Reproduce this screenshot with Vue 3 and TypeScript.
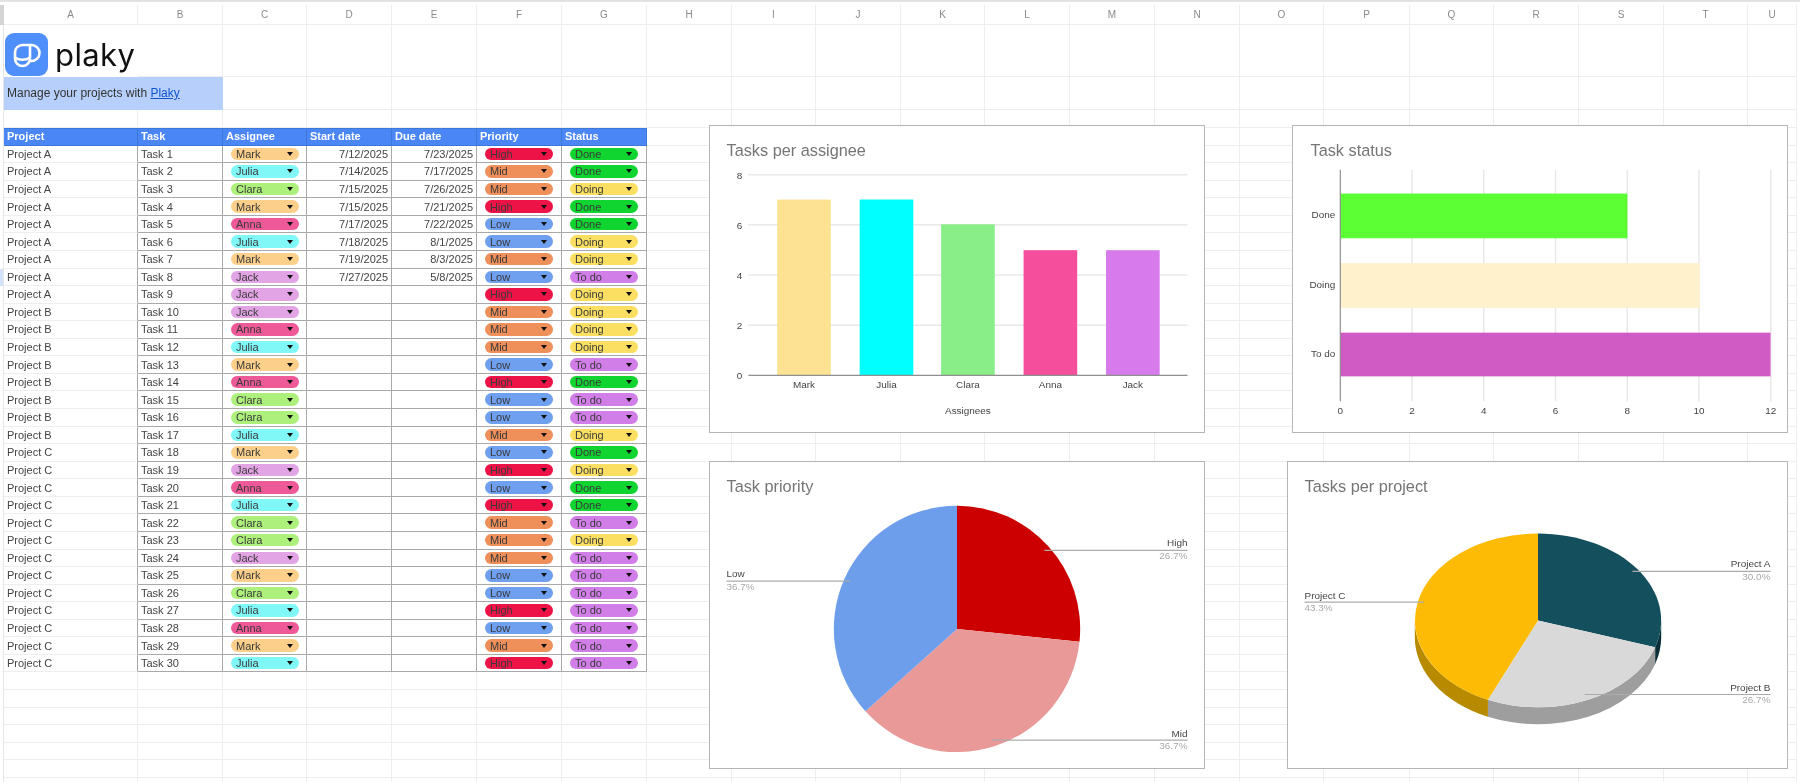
<script setup lang="ts">
const letters = 'ABCDEFGHIJKLMNOPQRSTU'.split('');

// one line per task: project|assignee|priority|status|start|due
const raw = [
  'A|Mark|High|Done|7/12/2025|7/23/2025',
  'A|Julia|Mid|Done|7/14/2025|7/17/2025',
  'A|Clara|Mid|Doing|7/15/2025|7/26/2025',
  'A|Mark|High|Done|7/15/2025|7/21/2025',
  'A|Anna|Low|Done|7/17/2025|7/22/2025',
  'A|Julia|Low|Doing|7/18/2025|8/1/2025',
  'A|Mark|Mid|Doing|7/19/2025|8/3/2025',
  'A|Jack|Low|To do|7/27/2025|5/8/2025',
  'A|Jack|High|Doing',
  'B|Jack|Mid|Doing',
  'B|Anna|Mid|Doing',
  'B|Julia|Mid|Doing',
  'B|Mark|Low|To do',
  'B|Anna|High|Done',
  'B|Clara|Low|To do',
  'B|Clara|Low|To do',
  'B|Julia|Mid|Doing',
  'C|Mark|Low|Done',
  'C|Jack|High|Doing',
  'C|Anna|Low|Done',
  'C|Julia|High|Done',
  'C|Clara|Mid|To do',
  'C|Clara|Mid|Doing',
  'C|Jack|Mid|To do',
  'C|Mark|Low|To do',
  'C|Clara|Low|To do',
  'C|Julia|High|To do',
  'C|Anna|Low|To do',
  'C|Mark|Mid|To do',
  'C|Julia|High|To do',
];

const tasks = raw.map((line, i) => {
  const [project, assignee, priority, status, start, due] = line.split('|');
  return { project: 'Project ' + project, task: 'Task ' + (i + 1), assignee, priority, status, start: start || '', due: due || '' };
});

const pillColors: Record<string, string> = {
  Mark: '#fcd08a',
  Julia: '#80f8f8',
  Clara: '#aef07c',
  Anna: '#ee5a98',
  Jack: '#e2a4e4',
  High: '#ee1346',
  Mid: '#ef8f5a',
  Low: '#6f9fef',
  Done: '#10d430',
  Doing: '#fbdf62',
  'To do': '#d17ee9',
};

const headers = ['Project', 'Task', 'Assignee', 'Start date', 'Due date', 'Priority', 'Status'];

const bars = [
  { name: 'Mark', x: 776, top: 202, color: '#fde293' },
  { name: 'Julia', x: 859, top: 202, color: '#00ffff' },
  { name: 'Clara', x: 941, top: 227, color: '#8aee88' },
  { name: 'Anna', x: 1024, top: 253, color: '#f54e9c' },
  { name: 'Jack', x: 1107, top: 253, color: '#d77bec' },
];

const statusBars = [
  { name: 'Done', y: 196, h: 45, w: 289, color: '#5cff33' },
  { name: 'Doing', y: 266, h: 45, w: 362, color: '#fef1cc' },
  { name: 'To do', y: 336, h: 44, w: 433, color: '#d15bc4' },
];

function pt(cx: number, cy: number, rx: number, ry: number, deg: number) {
  const a = (deg * Math.PI) / 180;
  return [cx + rx * Math.sin(a), cy - ry * Math.cos(a)].map((n) => n.toFixed(1)).join(' ');
}

function slice(cx: number, cy: number, rx: number, ry: number, from: number, to: number) {
  const large = to - from > 180 ? 1 : 0;
  return `M${cx} ${cy}L${pt(cx, cy, rx, ry, from)}A${rx} ${ry} 0 ${large} 1 ${pt(cx, cy, rx, ry, to)}Z`;
}

// outer wall of a 3d slice
function wall(cx: number, cy: number, rx: number, ry: number, depth: number, from: number, to: number) {
  return `M${pt(cx, cy, rx, ry, from)}A${rx} ${ry} 0 0 1 ${pt(cx, cy, rx, ry, to)}L${pt(cx, cy + depth, rx, ry, to)}A${rx} ${ry} 0 0 0 ${pt(cx, cy + depth, rx, ry, from)}Z`;
}

const prioritySlices = [
  { d: slice(957, 632, 124, 124, 0, 96), color: '#cc0000' },
  { d: slice(957, 632, 124, 124, 96, 228), color: '#ea9999' },
  { d: slice(957, 632, 124, 124, 228, 360), color: '#6d9eeb' },
];

const projectWalls = [
  { d: wall(1538, 623.5, 124, 87.5, 17, 90, 108), color: '#0b2f38' },
  { d: wall(1538, 623.5, 124, 87.5, 17, 108, 204), color: '#9e9e9e' },
  { d: wall(1538, 623.5, 124, 87.5, 17, 204, 270), color: '#b88a00' },
];

const projectSlices = [
  { d: slice(1538, 623.5, 124, 87.5, 0, 108), color: '#134f5c' },
  { d: slice(1538, 623.5, 124, 87.5, 108, 204), color: '#d9d9d9' },
  { d: slice(1538, 623.5, 124, 87.5, 204, 360), color: '#fdbb05' },
];
</script>

<template>
  <div class="sheet">
    <div class="row col-head">
      <div class="corner"></div>
      <div v-for="l in letters" :key="l" class="cell">{{ l }}</div>
    </div>

    <div class="row logo-row">
      <div class="side"></div>
      <div class="cell logo-cell">
        <svg class="logo-mark" width="43" height="43" viewBox="0 0 43 43">
          <rect width="43" height="43" rx="9" fill="#4f8ffb" />
          <path d="M25 12H26.5A8 8 0 0 1 26.5 28H25V25.500A7.500 7.500 0 0 1 10 25.500V19.500A7.500 7.500 0 0 1 17.500 12Z" fill="none" stroke="#fff" stroke-width="2.600" />
          <circle cx="17" cy="18.500" r="4" fill="#4f8ffb" stroke="#fff" stroke-width="0" />
          <path d="M10 24.500C14 27.500 21 27.500 25 24.500" fill="none" stroke="#fff" stroke-width="2.600" />
          <path d="M25 12V25" fill="none" stroke="#fff" stroke-width="2.600" />
        </svg>
        <span class="logo-text">plaky</span>
      </div>
      <div v-for="n in 20" :key="n" class="cell"></div>
    </div>

    <div class="row tag-row">
      <div class="side"></div>
      <div class="tagline">Manage your projects with <a href="#">Plaky</a></div>
      <div v-for="n in 19" :key="n" class="cell"></div>
    </div>

    <div class="row gap-row">
      <div class="side"></div>
      <div v-for="n in 21" :key="n" class="cell"></div>
    </div>

    <div class="row data-row">
      <div class="side"></div>
      <div v-for="h in headers" :key="h" class="cell th">{{ h }}</div>
      <div v-for="n in 14" :key="n" class="cell"></div>
    </div>

    <div v-for="(t, i) in tasks" :key="t.task" class="row data-row">
      <div class="side" :class="{ picked: i === 7 }"></div>
      <div class="cell td first">{{ t.project }}</div>
      <div class="cell td">{{ t.task }}</div>
      <div class="cell td">
        <span class="pill" :style="{ background: pillColors[t.assignee] }">{{ t.assignee }}<i class="caret"></i></span>
      </div>
      <div class="cell td date">{{ t.start }}</div>
      <div class="cell td date">{{ t.due }}</div>
      <div class="cell td">
        <span class="pill" :style="{ background: pillColors[t.priority] }">{{ t.priority }}<i class="caret"></i></span>
      </div>
      <div class="cell td">
        <span class="pill" :style="{ background: pillColors[t.status] }">{{ t.status }}<i class="caret"></i></span>
      </div>
      <div v-for="n in 14" :key="n" class="cell"></div>
    </div>

    <div v-for="r in 7" :key="'blank' + r" class="row data-row">
      <div class="side"></div>
      <div v-for="n in 21" :key="n" class="cell"></div>
    </div>

    <!-- charts float over the grid like in the real spreadsheet -->
    <svg class="chart assignee" viewBox="709 128 496 308">
      <text x="725" y="158" class="title">Tasks per assignee</text>
      <g v-for="(v, i) in [8, 6, 4, 2]" :key="v">
        <line x1="747" x2="1189" :y1="177 + i * 50.500" :y2="177 + i * 50.500" class="grid" />
        <text x="741" :y="181 + i * 50.500" class="label end">{{ v }}</text>
      </g>
      <text x="741" y="383" class="label end">0</text>
      <g v-for="b in bars" :key="b.name">
        <rect :x="b.x" :y="b.top" width="54" :height="379 - b.top" :fill="b.color" />
        <text :x="b.x + 27" y="392" class="label mid">{{ b.name }}</text>
      </g>
      <line x1="747" x2="1189" y1="379" y2="379" class="axis" />
      <text x="968" y="418" class="label mid">Assignees</text>
    </svg>

    <svg class="chart status" viewBox="1292 128 496 308">
      <text x="1309" y="158" class="title">Task status</text>
      <g v-for="(v, i) in [2, 4, 6, 8, 10, 12]" :key="v">
        <line :x1="1339 + (i + 1) * 72.200" :x2="1339 + (i + 1) * 72.200" y1="172" y2="405" class="grid" />
        <text :x="1339 + (i + 1) * 72.200" y="418" class="label mid">{{ v }}</text>
      </g>
      <text x="1339" y="418" class="label mid">0</text>
      <g v-for="b in statusBars" :key="b.name">
        <rect x="1339" :y="b.y" :width="b.w" :height="b.h" :fill="b.color" />
        <text x="1334" :y="b.y + 25" class="label end">{{ b.name }}</text>
      </g>
      <line x1="1339" x2="1339" y1="172" y2="405" class="axis" />
    </svg>

    <svg class="chart priority" viewBox="709 464 496 308">
      <text x="725" y="494" class="title">Task priority</text>
      <path v-for="s in prioritySlices" :key="s.color" :d="s.d" :fill="s.color" />
      <line x1="1045" x2="1189" y1="553" y2="553" class="lead" />
      <text x="1189" y="549" class="label end">High</text>
      <text x="1189" y="562" class="pct end">26.7%</text>
      <line x1="725" x2="849" y1="584" y2="584" class="lead" />
      <text x="725" y="580" class="label">Low</text>
      <text x="725" y="593" class="pct">36.7%</text>
      <line x1="992" x2="1189" y1="744" y2="744" class="lead" />
      <text x="1189" y="741" class="label end">Mid</text>
      <text x="1189" y="753" class="pct end">36.7%</text>
    </svg>

    <svg class="chart project" viewBox="1287 464 501 308">
      <text x="1303" y="494" class="title">Tasks per project</text>
      <path v-for="w in projectWalls" :key="w.color" :d="w.d" :fill="w.color" />
      <path v-for="s in projectSlices" :key="s.color" :d="s.d" :fill="s.color" />
      <line x1="1633" x2="1772" y1="574" y2="574" class="lead" />
      <text x="1772" y="570" class="label end">Project A</text>
      <text x="1772" y="583" class="pct end">30.0%</text>
      <line x1="1303" x2="1423" y1="605" y2="605" class="lead" />
      <text x="1303" y="602" class="label">Project C</text>
      <text x="1303" y="614" class="pct">43.3%</text>
      <line x1="1585" x2="1772" y1="698" y2="698" class="lead" />
      <text x="1772" y="695" class="label end">Project B</text>
      <text x="1772" y="707" class="pct end">26.7%</text>
    </svg>
  </div>
</template>

<style>
html,
body {
  margin: 0;
  overflow: hidden;
  background: #fff;
}
</style>

<style scoped>
.sheet {
  --cols: 4px 134px 85px 84px 85px 85px 85px 85px 85px 84px 85px 84px 85px 85px 85px 84px 86px 84px 85px 85px 84px 49px;
  position: relative;
  width: 1800px;
  height: 782px;
  overflow: hidden;
  box-sizing: border-box;
  background: #fff;
  border-top: 2px solid #e2e2e2;
  padding-top: 3px;
  font-family: 'Liberation Sans', Arial, sans-serif;
  font-size: 11px;
  color: #444;
  filter: blur(0.35px);
}

.row {
  display: grid;
  grid-template-columns: var(--cols);
  box-sizing: border-box;
}

.cell {
  border-right: 1px solid #eeeeee;
  border-bottom: 1px solid #eeeeee;
  box-sizing: border-box;
  min-width: 0;
  white-space: nowrap;
}

.side {
  border-right: 1px solid #e6e6e6;
}

.side.picked {
  background: #d3e3fd;
}

.col-head {
  height: 20px;
  text-align: center;
  line-height: 19px;
  color: #8a8a8a;
  font-size: 10px;
}

.corner {
  background: #d4d4d4;
}

.logo-row {
  height: 52px;
}

.logo-cell {
  display: flex;
  align-items: flex-end;
  gap: 7px;
  padding-left: 1px;
  border-right: none;
  border-bottom: none;
  grid-column: span 1;
}

.logo-mark {
  flex: none;
  margin-bottom: 1px;
}

.logo-text {
  font-family: Inter, 'Noto Sans', sans-serif;
  font-size: 31px;
  line-height: 44px;
  color: #111;
  letter-spacing: 0.4px;
}

.tag-row {
  height: 33px;
}

.tagline {
  grid-column: span 2;
  background: #b7d0fb;
  padding-left: 3px;
  line-height: 32px;
  font-size: 12px;
  color: #333;
}

.tagline a {
  color: #1155cc;
}

.gap-row {
  height: 18px;
}

.data-row {
  height: 17.57px;
}

.cell.th {
  background: #4a86f5;
  border-right: 1px solid #3c78d8;
  border-top: 1px solid #3c78d8;
  border-bottom: 1px solid #3c78d8;
  color: #fff;
  font-weight: 700;
  padding-left: 3px;
  line-height: 15px;
}

.cell.td {
  display: flex;
  align-items: center;
  padding: 0 3px;
  border-right: 1px solid #a9a9a9;
  border-bottom: 1px solid #a9a9a9;
  border-left: none;
}

.cell.td.first {
  border-right: 1px solid #a9a9a9;
  border-bottom: 1px solid #eeeeee;
}

.cell.td.date {
  justify-content: flex-end;
}

.pill {
  display: flex;
  align-items: center;
  justify-content: space-between;
  box-sizing: border-box;
  width: 68px;
  height: 12.500px;
  margin-left: 5px;
  padding: 0 6px 0 5px;
  border-radius: 7px;
  font-size: 11px;
  line-height: 12px;
  color: #3a3a3a;
}

.caret {
  width: 0;
  height: 0;
  border-left: 3px solid transparent;
  border-right: 3px solid transparent;
  border-top: 4px solid #111;
}

.chart {
  position: absolute;
  box-sizing: border-box;
  background: #fff;
  border: 1.500px solid #b5b5b5;
  font-family: 'Liberation Sans', Arial, sans-serif;
}

.chart.assignee {
  left: 709px;
  top: 123px;
  width: 496px;
  height: 308px;
}

.chart.status {
  left: 1292px;
  top: 123px;
  width: 496px;
  height: 308px;
}

.chart.priority {
  left: 709px;
  top: 459px;
  width: 496px;
  height: 308px;
}

.chart.project {
  left: 1287px;
  top: 459px;
  width: 501px;
  height: 308px;
}

.title {
  font-size: 16.400px;
  fill: #757575;
}

.label {
  font-size: 10px;
  fill: #444;
}

.pct {
  font-size: 10px;
  fill: #a8a8a8;
}

.end {
  text-anchor: end;
}

.mid {
  text-anchor: middle;
}

.grid {
  stroke: #e8e8e8;
  stroke-width: 1.500;
}

.axis {
  stroke: #8f8f8f;
  stroke-width: 1.200;
}

.lead {
  stroke: #ababab;
  stroke-width: 1.200;
}
</style>
